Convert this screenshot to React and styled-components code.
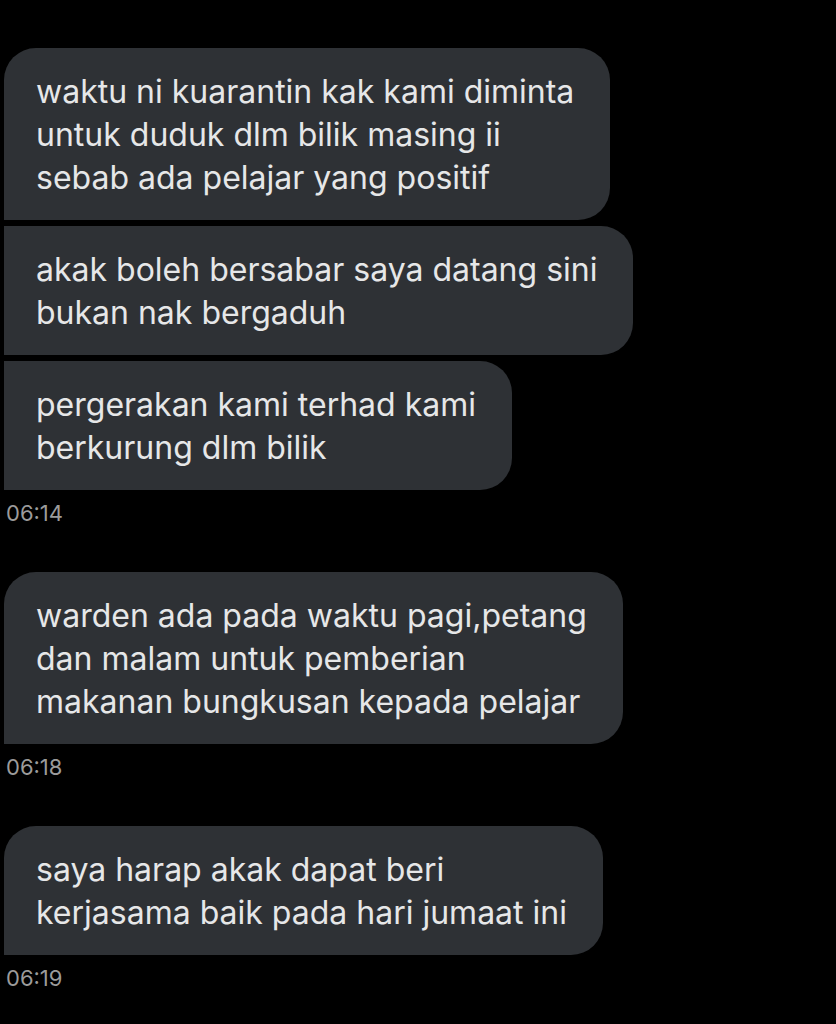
import React from 'react';
import styled, { createGlobalStyle } from 'styled-components';

const GlobalStyle = createGlobalStyle`
    html, body {
        margin: 0;
        padding: 0;
        background: #000000;
    }
    body {
        font-family: Inter, "Noto Sans", sans-serif;
        -webkit-font-smoothing: antialiased;
    }
`;

const Page = styled.div`
    width: 836px;
    min-height: 1024px;
    background: #000000;
    padding: 48px 0 0 4px;
    box-sizing: border-box;
    display: flex;
    flex-direction: column;
    gap: 46px;
`;

const Group = styled.div`
    display: flex;
    flex-direction: column;
    align-items: flex-start;
`;

const Stack = styled.div`
    display: flex;
    flex-direction: column;
    align-items: flex-start;
    gap: 6px;
`;

const Bubble = styled.div`
    background: #2e3135;
    color: #e6e7e8;
    font-size: 32px;
    font-weight: 400;
    line-height: 43px;
    padding: 22px 36px 21px 32px;
    border-radius: ${(p) => (p.$first ? '32px' : '0')} 32px 32px 0;
    white-space: nowrap;
`;

const Time = styled.div`
    margin-top: 10px;
    margin-left: 2px;
    font-size: 22px;
    line-height: 26px;
    color: #9b9b9b;
`;

const groups = [
    {
        time: '06:14',
        messages: [
            ['waktu ni kuarantin kak kami diminta', 'untuk duduk dlm bilik masing ii', 'sebab ada pelajar yang positif'],
            ['akak boleh bersabar saya datang sini', 'bukan nak bergaduh'],
            ['pergerakan kami terhad kami', 'berkurung dlm bilik'],
        ],
    },
    {
        time: '06:18',
        messages: [
            ['warden ada pada waktu pagi,petang', 'dan malam untuk pemberian', 'makanan bungkusan kepada pelajar'],
        ],
    },
    {
        time: '06:19',
        messages: [
            ['saya harap akak dapat beri', 'kerjasama baik pada hari jumaat ini'],
        ],
    },
];

export default function App() {
    return (
        <>
            <GlobalStyle />
            <Page>
                {groups.map((group) => (
                    <Group key={group.time}>
                        <Stack>
                            {group.messages.map((lines, i) => (
                                <Bubble key={i} $first={i === 0}>
                                    {lines.map((line, j) => (
                                        <div key={j}>{line}</div>
                                    ))}
                                </Bubble>
                            ))}
                        </Stack>
                        <Time>{group.time}</Time>
                    </Group>
                ))}
            </Page>
        </>
    );
}
